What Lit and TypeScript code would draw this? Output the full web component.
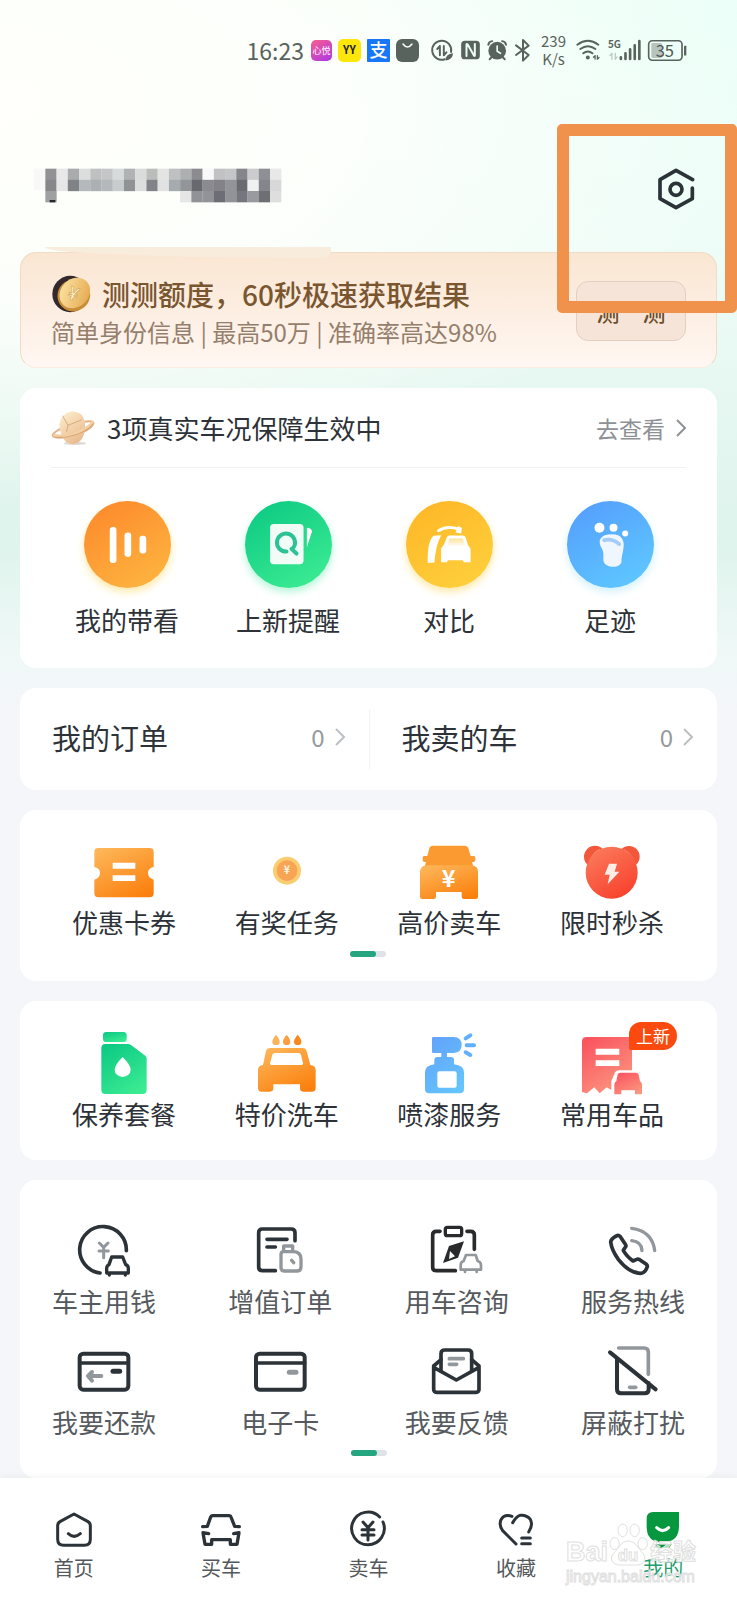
import { LitElement, html, svg, css, nothing, TemplateResult } from "lit";
import { customElement } from "lit/decorators.js";
import { classMap } from "lit/directives/class-map.js";

type Art = TemplateResult;
interface Entry { label: string; box: string; art: Art; badge?: string }

const INK = "#2b3238";
const GREY = "#92979c";

const icon = (box: string, w: number, h: number, art: unknown) =>
  html`<svg viewBox=${box} width=${w} height=${h} fill="none" stroke-linecap="round" stroke-linejoin="round" aria-hidden="true">${art}</svg>`;

const chevron = html`<svg class="chevron" viewBox="0 0 10 18" width="10" height="18" fill="none" stroke="currentColor" stroke-width="2" aria-hidden="true"><path d="M1 1l8 8-8 8"/></svg>`;

const yen = (x: number, y: number, size: number, fill: string, weight = 700) =>
  svg`<text x=${x} y=${y} font-size=${size} font-weight=${weight} text-anchor="middle" fill=${fill}>¥</text>`;

const shortcuts: Entry[] = [
  { label: "我的带看", box: "192 334 260 260", art: svg`
    <circle cx="322" cy="464" r="130" fill="url(#orange)"/>
    <g fill="#fff"><rect x="269" y="412" width="20" height="107" rx="9"/><rect x="313" y="428" width="20" height="73" rx="9"/><rect x="358" y="438" width="20" height="53" rx="9"/></g>` },
  { label: "上新提醒", box: "673 333 260 260", art: svg`
    <circle cx="803" cy="463" r="130" fill="url(#green)"/>
    <path d="M858 413q16 2 15 12l-15 46z" fill="#fff"/>
    <rect x="748" y="402" width="100" height="120" rx="11" fill="#f1fcf7"/>
    <path d="M797 484a27 27 0 1 1 21-12M812 476l15 14" stroke="#2cc296" stroke-width="12"/>` },
  { label: "对比", box: "106 335 260 260", art: svg`
    <circle cx="236" cy="465" r="130" fill="url(#yellow)"/>
    <path d="M203 424q26-16 60-5" stroke="#fff" stroke-width="9"/>
    <path d="M262 410l11 6-2 16-17-3z" fill="#fff"/>
    <path d="M188 439l23-2q-17 32-20 82l-20 1q-2-62 17-81z" fill="#fff"/>
    <path d="M236 438h40q6 0 8 6l8 24 7 10v40h-20l-3-6h-44l-4 6h-17v-42l9-12 8-20q2-6 8-6z" fill="#fff"/>
    <path d="M236 447h40l7 24h-54z" fill="url(#windscreen)"/>` },
  { label: "足迹", box: "588 335 260 260", art: svg`
    <circle cx="718" cy="465" r="130" fill="url(#blue)"/>
    <g fill="#fff"><circle cx="685" cy="415" r="15"/><circle cx="727" cy="415" r="12"/><circle cx="762" cy="432" r="9"/></g>
    <path d="M722 434c30 0 38 18 35 40-2 18-6 24-6 40 0 24-50 22-54 0-1-14 2-24-5-37-14-24-5-43 30-43z" fill="#eff6ff"/>
    <path d="M699 452q25-6 45 12" stroke="#a3cdf8" stroke-width="11"/>` },
];

const perks: Entry[] = [
  { label: "优惠卡券", box: "223 90 180 192", art: svg`
    <path d="M236 114h154q12 0 12 12v45q-17 3-17 18t17 20v41q0 12-12 12H236q-12 0-12-12v-41q17-5 17-20t-17-18v-45q0-12 12-12z" fill="url(#amber)"/>
    <path d="M279 158h68v18h-68zM279 196h68v17h-68z" fill="#fff"/>` },
  { label: "有奖任务", box: "710 90 180 192", art: svg`
    <circle cx="800" cy="182" r="42" fill="#fccd70"/><circle cx="800" cy="182" r="31" fill="#f7a555"/>${yen(800, 193, 32, "#fff3e4")}` },
  { label: "高价卖车", box: "147 90 180 192", art: svg`
    <path d="M187 107h98q8 0 10 8l7 23h10q4 0 4 6v6q0 6-6 6h-4l4 14H164l4-14h-4q-6 0-6-6v-6q0-6 4-6h10l6-23q2-8 9-8z" fill="#fa9a30"/>
    <path d="M172 166h130q22 0 22 20v74q0 7-7 7h-35q-7 0-7-7v-14h-77v14q0 7-7 7h-34q-7 0-7-7v-74q0-20 22-20z" fill="url(#amber)"/>
    ${yen(236, 231, 70, "#fff")}` },
  { label: "限时秒杀", box: "635 90 180 192", art: svg`
    <circle cx="674" cy="140" r="33" fill="#f2573c"/><circle cx="776" cy="140" r="32" fill="#f2573c"/>
    <path d="M662 148q9-22 26-29M762 120q17 9 25 27" stroke="#fb8a67" stroke-width="4"/>
    <circle cx="724" cy="188" r="78" fill="url(#red)"/>
    <path d="M716 161h24l-7 24h14l-35 38 6-29h-15z" fill="#ffece6"/>` },
];

const services: Entry[] = [
  { label: "保养套餐", box: "223 660 180 192", art: svg`
    <rect x="250" y="663" width="71" height="30" rx="10" fill="url(#green)"/>
    <path d="M257 699h67q6 0 10 3l43 32q4 3 4 9v93q0 13-13 13H258q-13 0-13-13V711q0-12 12-12z" fill="url(#green)"/>
    <path d="M309 738q24 24 24 38a24 22 0 0 1-48 0q0-14 24-38z" fill="#fff"/>` },
  { label: "特价洗车", box: "710 660 180 192", art: svg`
    <path d="M767 671q11 13 11 21a11 10 0 0 1-22 0q0-8 11-21z" fill="#fbb25c"/><path d="M799 671q11 13 11 21a11 10 0 0 1-22 0q0-8 11-21z" fill="#fa9f3f"/><path d="M832 671q11 13 11 21a11 10 0 0 1-22 0q0-8 11-21z" fill="#f8871e"/>
    <path d="M750 711h96q10 0 13 9l11 42q16 2 16 15v54q0 11-11 11h-26q-10 0-10-10v-12h-80v12q0 10-10 10h-25q-11 0-11-11v-54q0-13 15-15l9-42q3-9 13-9z" fill="url(#amber)"/>
    <path d="M763 726h72q5 0 7 5l6 26q0 5-4 5h-91q-4 0-4-5l7-26q2-5 7-5z" fill="#fff"/>` },
  { label: "喷漆服务", box: "147 660 180 192", art: svg`
    <path d="M190 678h61q24 1 24 24t-24 24h-20v12h12q9 0 9 9v13q30 3 30 24v50q0 13-13 13h-91q-13 0-13-13v-50q0-21 28-24v-13q0-9 9-9h12v-12h-24q-4 0-4-4v-40q0-4 4-4z" fill="url(#sky)"/>
    <rect x="202" y="781" width="58" height="49" rx="6" fill="#fff"/>
    <path d="M287 682l14-9M290 703h22M287 724l14 8" stroke="#62b0fb" stroke-width="12"/>` },
  { label: "常用车品", badge: "上新", box: "638 660 180 192", art: svg`
    <path d="M652 678h124q12 0 12 12v88h-38q-12 0-16 13l-8 20v26l-14-8-21 18-16-18-22 18-15-4V691q0-13 14-13z" fill="url(#coral)"/>
    <path d="M679 713h71v18h-71zM679 748h71v17h-71z" fill="#fff"/>
    <path d="M753 785h47q6 0 8 6l4 20q6 3 6 10v29h-21v-12h-41v12h-21v-29q0-7 6-10l4-20q2-6 8-6z" fill="url(#coral)"/>` },
];

const tools: Entry[] = [
  { label: "车主用钱", box: "170 126 168 168", art: svg`
    <path d="M242 276a70 70 0 1 1 79-67" stroke=${INK} stroke-width="11"/>
    <path d="M240 186l13 13 13-13M239 210h28M253 202v28" stroke=${GREY} stroke-width="9"/>
    <path d="M277 228h33l9 23q8 3 8 11v14h-65v-14q0-8 7-11zM270 276v6M318 276v6" stroke=${INK} stroke-width="10"/>` },
  { label: "增值订单", box: "696 126 168 168", art: svg`
    <path d="M766 269h-39q-11 0-11-11V155q0-11 11-11h87q11 0 11 11v24" stroke=${INK} stroke-width="11"/>
    <path d="M741 175h60M741 198h25" stroke=${INK} stroke-width="11"/>
    <path d="M791 212v-17h27v17h-27q-8 0-8 8v40q0 10 10 10h38q12 0 12-12v-24q0-22-25-22M815 238l6 7" stroke=${GREY} stroke-width="10"/>` },
  { label: "用车咨询", box: "175 126 168 168", art: svg`
    <path d="M208 151h-11q-11 0-11 11v97q0 10 11 10h57M289 151h11q11 0 11 11v43" stroke="#292a2c" stroke-width="11"/>
    <rect x="224" y="139" width="49" height="25" rx="6" stroke="#292a2c" stroke-width="10"/>
    <path d="M280 181l-18 49-45 16 18-51z" fill="#292a2c"/><path d="M238 210l15 16-18 8z" fill="#fff"/>
    <path d="M286 222h29l6 18q10 3 10 12v14h-61v-14q0-9 9-12zM283 266v7M318 266v7" stroke=${GREY} stroke-width="8"/>` },
  { label: "服务热线", box: "702 126 168 168", art: svg`
    <path d="M736 165q6-4 11 1l16 24q4 6-1 10l-5 8q9 17 29 32l11-5q4-2 9 1l19 13q6 5 3 10-6 18-20 18-35-2-66-42-20-28-23-52 1-10 17-18z" stroke=${INK} stroke-width="11"/>
    <path d="M782 179q30 3 31 30M782 142q62 8 69 67" stroke=${GREY} stroke-width="10"/>` },
  { label: "我要还款", box: "170 489 168 168", art: svg`
    <rect x="181" y="518" width="146" height="108" rx="11" stroke=${INK} stroke-width="12"/><path d="M181 546h146" stroke=${INK} stroke-width="11"/>
    <path d="M281 571h20" stroke=${INK} stroke-width="15"/><path d="M246 585h-35M218 573l-12 12 12 14" stroke=${GREY} stroke-width="12"/>` },
  { label: "电子卡", box: "696 489 168 168", art: svg`
    <rect x="708" y="518" width="146" height="108" rx="11" stroke=${INK} stroke-width="12"/><path d="M708 546h146" stroke=${INK} stroke-width="11"/>
    <path d="M808 574h20" stroke=${GREY} stroke-width="15"/>` },
  { label: "我要反馈", box: "175 489 168 168", art: svg`
    <path d="M211 571v-53q0-11 11-11h70q11 0 11 11v53" stroke=${INK} stroke-width="11"/>
    <path d="M211 536l-22 19v70q0 9 9 9h118q9 0 9-9v-70l-22-19M189 559l68 38 68-38" stroke=${INK} stroke-width="11"/>
    <path d="M236 533h42M236 550h22" stroke=${GREY} stroke-width="11"/>` },
  { label: "屏蔽打扰", box: "702 489 168 168", art: svg`
    <path d="M743 501h76q13 0 13 13v66" stroke=${GREY} stroke-width="11"/>
    <path d="M738 534v91q0 12 12 12h71q12 0 12-12v-19M717 514l137 111" stroke=${INK} stroke-width="12"/>
    <path d="M776 619h18" stroke=${GREY} stroke-width="11"/>` },
];

const tabs: Entry[] = [
  { label: "首页", box: "162 114 120 120", art: svg`
    <path d="M222 126l42 23q7 4 7 13v40q0 18-18 18h-62q-18 0-18-18v-40q0-9 7-13zM205 185q17 16 36 0" stroke=${INK} stroke-width="9"/>` },
  { label: "买车", box: "606 114 120 120", art: svg`
    <path d="M611 164l14-1 10-28q2-4 6-4h50q4 0 5 4l11 28 14 1" stroke=${INK} stroke-width="10"/>
    <path d="M612 182l6 35h20v-14h56v14h20l6-35-16 3M612 182l17 3" stroke=${INK} stroke-width="10"/>` },
  { label: "卖车", box: "1047 114 120 120", art: svg`
    <path d="M1152 150a49 49 0 1 1-10-15" stroke=${INK} stroke-width="9"/>
    <path d="M1092 150l15 17 15-17M1089 173h36M1089 189h36M1107 167v37" stroke=${INK} stroke-width="9"/>` },
  { label: "收藏", box: "388 114 120 120", art: svg`
    <path d="M436 133q-23-8-33 10-7 16 5 33l40 40M438 152q10-18 22-22 20-2 31 12 9 17-5 38" stroke=${INK} stroke-width="9"/>
    <path d="M465 198h26M465 215h26" stroke=${INK} stroke-width="9"/>` },
  { label: "我的", box: "830 114 120 120", art: svg`
    <path d="M860 120h78v42q0 49-49 49t-48-49v-22q0-20 19-20z" fill="#07983f"/>
    <path d="M871 167q18 18 36 0" stroke="#fff" stroke-width="9"/><path d="M864 217h52l-7 10h-38z" fill="#07983f"/>` },
];

const mosaic: string[][] = [
  "929296 e8e8e8 aaabad dcdedd bfc0c0 c4c6c7 d8dbdb b0b2b3 d9dcdb bbbdbc e4e4e3 bfc0c1 adb0b1 8b8b90 f8f8f9 c2c2c4 c5c6c8 85858b cccccf 8f9096 e8e8e8".split(" "),
  "87878b e6e6e6 7f8386 b5b9bb aab0b3 b3b8bb c8cccd 8f9396 dcdede 808488 e2e2e3 a5abae 929699 68686f 8a8a90 828288 939399 6a6a72 f0f2f1 85868b d8d8da".split(" "),
  "a0a0a3 - - - - - - - - - - - e6e6e6 919197 929299 6d6d75 929299 76767e 999aa0 6e6f75 dedede".split(" "),
];

const gradient = (id: string, from: string, to: string) => svg`
  <linearGradient id=${id} x1="0.2" y1="0" x2="0.8" y2="1"><stop offset="0" stop-color=${from}/><stop offset="1" stop-color=${to}/></linearGradient>`;

@customElement("app-root")
export class AppRoot extends LitElement {
  static styles = css`
    :host {
      display: block;
      font-family: "Noto Sans CJK SC", "Noto Sans", sans-serif;
      color: #2d3238;
    }
    * { box-sizing: border-box; }
    svg { display: block; flex: none; overflow: visible; }
    button { font: inherit; color: inherit; background: none; border: 0; padding: 0; margin: 0; cursor: pointer; }
    a { color: inherit; text-decoration: none; }
    h1, h2, p { margin: 0; font-weight: 400; }
    .defs { position: absolute; }

    .page {
      position: relative;
      min-height: 100vh;
      display: flex;
      flex-direction: column;
      background:
        radial-gradient(ellipse 100% 400px at 0 100px, #fffffb 0, #fffffbcc 50%, #fffffb00 100%),
        linear-gradient(180deg, #ecfff8 0, #effdf8 240px, #e6f7f1 400px, #def4ec 540px, #eff8f7 650px, #f5f6fa 720px);
    }

    .status {
      height: 100px;
      padding-right: 50px;
      display: flex;
      align-items: center;
      justify-content: flex-end;
      gap: 7px;
      color: #59635d;
    }
    .time { font-size: 23px; line-height: 32px; }
    .apps { display: flex; gap: 6px; margin-right: 5px; }
    .speed { font-size: 15px; line-height: 18px; text-align: center; margin: 0 3px; }

    .profile {
      display: flex;
      justify-content: space-between;
      align-items: flex-start;
      padding: 68px 39px 42px 34px;
    }

    .content { display: flex; flex-direction: column; gap: 20px; padding: 0 20px; }

    .quota {
      position: relative;
      display: flex;
      align-items: center;
      justify-content: space-between;
      padding: 21px 30px 19px;
      border: 1px solid #eedcc6;
      border-bottom-color: #fbece2;
      border-radius: 16px;
      background: linear-gradient(180deg, #fae6d2, #fdeee2 50%, #fff7f2);
      color: #7a5630;
    }
    .quota::before {
      content: "";
      position: absolute;
      top: -6px;
      left: 24px;
      width: 286px;
      height: 11px;
      border-radius: 0 0 8px 100%;
      background: #f8ecdc;
    }
    .quota-title { display: flex; align-items: center; gap: 10px; font-size: 28px; line-height: 40px; font-weight: 500; }
    .quota-note { margin-top: 2px; font-size: 24px; line-height: 32px; color: #957f6c; white-space: nowrap; }
    .measure {
      width: 110px;
      height: 60px;
      border: 1px solid #e4d0c2;
      border-radius: 12px;
      background: #f5e4d7;
      font-size: 23px;
      font-weight: 500;
      color: #6c4c28;
    }

    .card { background: #fff; border-radius: 16px; }
    .guard {
      display: flex;
      align-items: center;
      gap: 11px;
      height: 80px;
      margin: 0 31px;
      border-bottom: 1px solid #f0f1f3;
    }
    .guard-title { font-size: 26px; line-height: 36px; flex: 1; }
    .more { display: flex; align-items: center; gap: 11px; font-size: 23px; line-height: 32px; color: #8e9195; }

    .row { display: flex; justify-content: space-between; }
    .item {
      position: relative;
      width: 104px;
      display: flex;
      flex-direction: column;
      align-items: center;
      font-size: 26px;
      line-height: 36px;
      white-space: nowrap;
    }
    .shortcuts { padding: 33px 55px 30px; }
    .shortcuts .item { gap: 14px; }
    .shortcuts svg { border-radius: 50%; box-shadow: 0 4px 8px #ffe9a8; }
    .shortcuts .item:nth-child(2) svg { box-shadow: 0 4px 8px #b4f5d8; }
    .shortcuts .item:nth-child(4) svg { box-shadow: 0 4px 8px #d2f1fd; }

    .counts { display: grid; grid-template-columns: 1fr 1fr; padding: 21px 0; }
    .count { display: flex; align-items: center; justify-content: space-between; height: 60px; padding: 0 24px 4px 32px; font-size: 29px; line-height: 40px; }
    .count + .count { border-left: 1px solid #f2f3f4; }
    .total { display: flex; align-items: center; gap: 10px; font-size: 24px; color: #96999c; }
    .total .chevron { color: #bcc0c4; }

    .offers { padding: 30px 53px 24px 52px; }
    .offers .pager { margin-top: 11px; }
    .services { padding: 30px 53px 28px 52px; }
    .services .item { gap: 1px; }
    .badge {
      position: absolute;
      top: -9px;
      right: -13px;
      padding: 0 7px;
      border-radius: 12px 14px 14px 2px;
      background: #fb4a10;
      color: #fff;
      font-size: 17px;
      line-height: 28px;
    }
    .tools { padding: 43px 32px 22px; display: flex; flex-direction: column; gap: 25px; color: #565a5e; }
    .tools .item { gap: 4px; }
    .tools .pager { margin-top: -15px; }
    .pager { width: 36px; height: 6px; margin: 0 auto; border-radius: 3px; background: #dee3e9; }
    .pager::before { content: ""; display: block; width: 26px; height: 6px; border-radius: 3px; background: #25a580; }

    .tabs {
      position: relative;
      margin-top: auto;
      display: grid;
      grid-template-columns: repeat(5, 1fr);
      padding: 32px 0 18px;
      background: #fff;
      box-shadow: 0 -2px 6px #0000000a;
    }
    .tab { display: flex; flex-direction: column; align-items: center; gap: 4px; font-size: 20px; line-height: 28px; color: #54585c; }
    .active { color: #1f9d6c; }

    .highlight {
      position: absolute;
      top: 124px;
      right: 0;
      width: 180px;
      height: 189px;
      border: 12px solid #f0924b;
      border-radius: 5px;
      pointer-events: none;
    }
    .watermark {
      position: absolute;
      right: 41px;
      bottom: 13px;
      font-family: "Liberation Sans", "Noto Sans CJK SC", sans-serif;
      color: #ffffffa0;
      -webkit-text-stroke: 1px #e0e0e0;
      pointer-events: none;
    }
    .mark { display: flex; align-items: flex-end; font-size: 27px; line-height: 30px; font-weight: 700; }
    .mark-cn { font-size: 23px; margin-left: 2px; }
    .site { font-size: 16px; line-height: 20px; }
  `;

  private item(e: Entry, w: number, h: number) {
    return html`<button class="item" type="button">
      ${icon(e.box, w, h, e.art)}<span>${e.label}</span>${e.badge ? html`<span class="badge">${e.badge}</span>` : nothing}
    </button>`;
  }

  private statusBar() {
    return html`<header class="status">
      <span class="time">16:23</span>
      <div class="apps">
        ${icon("0 0 21 23", 21, 23, svg`<rect y="1" width="21" height="21" rx="5" fill="url(#pink)"/><text x="10.5" y="15" font-size="9" text-anchor="middle" fill="#fff">心悦</text>`)}
        ${icon("0 0 23 23", 23, 23, svg`<rect width="23" height="23" rx="5" fill="#fde70b"/><text x="11.5" y="15" font-size="11" font-weight="700" text-anchor="middle" fill="#222">YY</text>`)}
        ${icon("0 0 23 23", 23, 23, svg`<rect width="23" height="23" rx="1" fill="#1777f5"/><text x="11.5" y="18" font-size="18" font-weight="500" text-anchor="middle" fill="#fff">支</text>`)}
        ${icon("0 0 23 23", 23, 23, svg`<rect width="23" height="23" rx="6" fill="#59635d"/><path d="M7 5q4.500 6 9 0" stroke="#fff" stroke-width="1.500"/>`)}
      </div>
      ${icon("600 54 70 72", 23, 24, svg`<path d="M642 118a29 29 0 1 1 19-22M627 78v28M627 78l-8 9M639 78v28l8-9" stroke="#59635d" stroke-width="6"/><path d="M645 122q-2-20 22-22-1 20-22 22z" fill="#59635d"/>`)}
      ${icon("690 54 56 72", 19, 24, svg`<rect x="690" y="62" width="56" height="56" rx="11" fill="#59635d"/><path d="M706 108V74q0-4 4 0l18 32q3 4 3 0V72" stroke="#ecfdf6" stroke-width="6"/>`)}
      ${icon("768 54 64 72", 21, 24, svg`<circle cx="799" cy="92" r="27" fill="#59635d"/><path d="M772 74q2-10 12-11M826 74q-2-10-12-11M782 112l-6 6M816 112l6 6" stroke="#59635d" stroke-width="6"/><path d="M799 78v16l10 6" stroke="#ecfdf6" stroke-width="5"/>`)}
      ${icon("854 54 48 72", 16, 24, svg`<path d="M857 76l38 29-17 17V60l17 17-38 28" stroke="#59635d" stroke-width="6"/>`)}
      <div class="speed">239<br/>K/s</div>
      ${icon("1040 54 76 72", 25, 24, svg`<path d="M1044 74q32-24 64 0M1053 87q23-17 46 0M1062 100q14-11 28 0" stroke="#59635d" stroke-width="6"/><circle cx="1076" cy="113" r="6" fill="#59635d"/><path d="M1098 118v-11l-5 5M1105 107v11l5-5" stroke="#59635d" stroke-width="4"/>`)}
      ${icon("1130 54 100 72", 33, 24, svg`<text x="1130" y="84" font-size="30" font-weight="700" fill="#59635d">5G</text><path d="M1142 118v-18l-6 7M1152 100v18l6-7" stroke="#bccbc4" stroke-width="4"/><path d="M1169 112v5M1183 100v17M1197 88v29M1211 76v41M1225 63v54" stroke="#59635d" stroke-width="8"/>`)}
      ${icon("1254 54 118 72", 39, 24, svg`<rect x="1256" y="62" width="101" height="59" rx="11" stroke="#59635d" stroke-width="5"/><rect x="1264" y="69" width="32" height="45" rx="4" fill="#b7c3bd"/><rect x="1363" y="77" width="7" height="30" rx="2" fill="#59635d"/><text x="1305" y="110" font-size="50" text-anchor="middle" fill="#4e5852">35</text>`)}
    </header>`;
  }

  render() {
    return html`
      <svg class="defs" width="0" height="0" aria-hidden="true"><defs>
        ${gradient("orange", "#fd8a2c", "#fdb540")}${gradient("green", "#0dca84", "#3cec92")}${gradient("yellow", "#feb727", "#fed03c")}
        ${gradient("blue", "#559ffd", "#5ec8ff")}${gradient("amber", "#fdb557", "#fb7f0c")}${gradient("red", "#fb7a5b", "#f83f2b")}
        ${gradient("sky", "#62a3fb", "#64c5fd")}${gradient("coral", "#fa5560", "#fc9880")}${gradient("pink", "#f45a94", "#b13ae0")}
        ${gradient("gold", "#fbe3a4", "#e5a94e")}${gradient("cream", "#fdeccb", "#e8b78a")}
        <linearGradient id="windscreen" x1="0" y1="0" x2="0" y2="1"><stop offset="0" stop-color="#fee29a"/><stop offset="1" stop-color="#fff"/></linearGradient>
      </defs></svg>
      <div class="page">
        ${this.statusBar()}
        <div class="profile">
          <svg width="300" height="42" viewBox="0 0 900 126" aria-hidden="true">
            <rect y="2" width="34" height="64" fill="#f8f8f7"/>
            ${mosaic.map((r, y) => r.map((c, x) => c === "-" ? nothing : svg`<rect x=${34 + x * 33.7} y=${2 + y * 33.5} width="34" height="34" fill=${"#" + c}/>`))}
            <rect x="47" y="96" width="17" height="7" fill="#25282c"/>
          </svg>
          <button type="button" aria-label="设置">
            ${icon("528 174 126 126", 42, 42, svg`<path d="M638 209l-50-28-48 28v57l48 27 49-27v-32" stroke=${INK} stroke-width="11"/><circle cx="588" cy="238" r="18" stroke=${INK} stroke-width="11"/>`)}
          </button>
        </div>
        <main class="content">
          <section class="quota">
            <div>
              <h1 class="quota-title">
                ${icon("158 496 124 120", 41, 40, svg`<ellipse cx="216" cy="556" rx="54" ry="55" fill="#33292d"/><ellipse cx="227" cy="560" rx="50" ry="48" fill="#c88d36" transform="rotate(-35 227 560)"/><ellipse cx="230" cy="553" rx="50" ry="42" fill="url(#gold)" transform="rotate(-45 230 553)"/><text x="226" y="575" font-size="56" text-anchor="middle" fill="#fff3cf" stroke="#c99a4a" stroke-width="1.500" transform="rotate(20 226 556)">¥</text>`)}
                测测额度，60秒极速获取结果
              </h1>
              <p class="quota-note">简单身份信息 | 最高50万 | 准确率高达98%</p>
            </div>
            <button class="measure" type="button">测&emsp;测</button>
          </section>

          <section class="card">
            <div class="guard">
              ${icon("93 60 135 108", 45, 36, svg`
                <ellipse cx="165" cy="160" rx="34" ry="5" fill="#e0d8d0"/>
                <path d="M190 96q34-6 30 6-8 18-58 34-46 12-62 4-8-8 22-24" stroke="#e6b287" stroke-width="6"/>
                <path d="M118 102q6-32 38-38 34 2 38 30 4 26-4 44-10 24-34 24-22-2-30-24-8-18-8-36z" fill="url(#cream)"/>
                <path d="M104 136q30 6 66-8 36-14 48-32" stroke="#f3cfa4" stroke-width="8"/>
                <path d="M106 142q32 4 66-9 34-13 46-31M128 78l16 28 40-16M144 106l-4 18" stroke="#c99263" stroke-width="2"/>`)}
              <h2 class="guard-title">3项真实车况保障生效中</h2>
              <a class="more" href="#guard">去查看 ${chevron}</a>
            </div>
            <div class="row shortcuts">${shortcuts.map((e) => this.item(e, 87, 87))}</div>
          </section>

          <section class="card counts">
            <a class="count" href="#orders">我的订单<span class="total">0 ${chevron}</span></a>
            <a class="count" href="#selling">我卖的车<span class="total">0 ${chevron}</span></a>
          </section>

          <section class="card offers">
            <div class="row">${perks.map((e) => this.item(e, 60, 64))}</div>
            <div class="pager"></div>
          </section>

          <section class="card row services">${services.map((e) => this.item(e, 60, 64))}</section>

          <section class="card tools">
            <div class="row">${tools.slice(0, 4).map((e) => this.item(e, 56, 56))}</div>
            <div class="row">${tools.slice(4).map((e) => this.item(e, 56, 56))}</div>
            <div class="pager"></div>
          </section>
        </main>

        <nav class="tabs">
          ${tabs.map((t, i) => html`<a class=${classMap({ tab: true, active: i === 4 })} href="#tab">${icon(t.box, 40, 40, t.art)}<span>${t.label}</span></a>`)}
        </nav>

        <div class="highlight"></div>
        <div class="watermark">
          <div class="mark">Bai
            <svg width="40" height="46" viewBox="0 0 120 138" fill="#ffffffa0" stroke="#e0e0e0" stroke-width="3" aria-hidden="true">
              <ellipse cx="20" cy="68" rx="14" ry="18"/><ellipse cx="44" cy="28" rx="14" ry="19"/><ellipse cx="80" cy="28" rx="14" ry="19"/><ellipse cx="104" cy="68" rx="14" ry="18"/>
              <path d="M60 60c24 0 30 24 46 38 14 22-6 36-22 34H36c-20 0-34-16-20-34 16-14 22-38 44-38z"/>
              <text x="60" y="120" font-size="50" text-anchor="middle">du</text>
            </svg>
            <span class="mark-cn">经验</span>
          </div>
          <div class="site">jingyan.baidu.com</div>
        </div>
      </div>`;
  }
}
